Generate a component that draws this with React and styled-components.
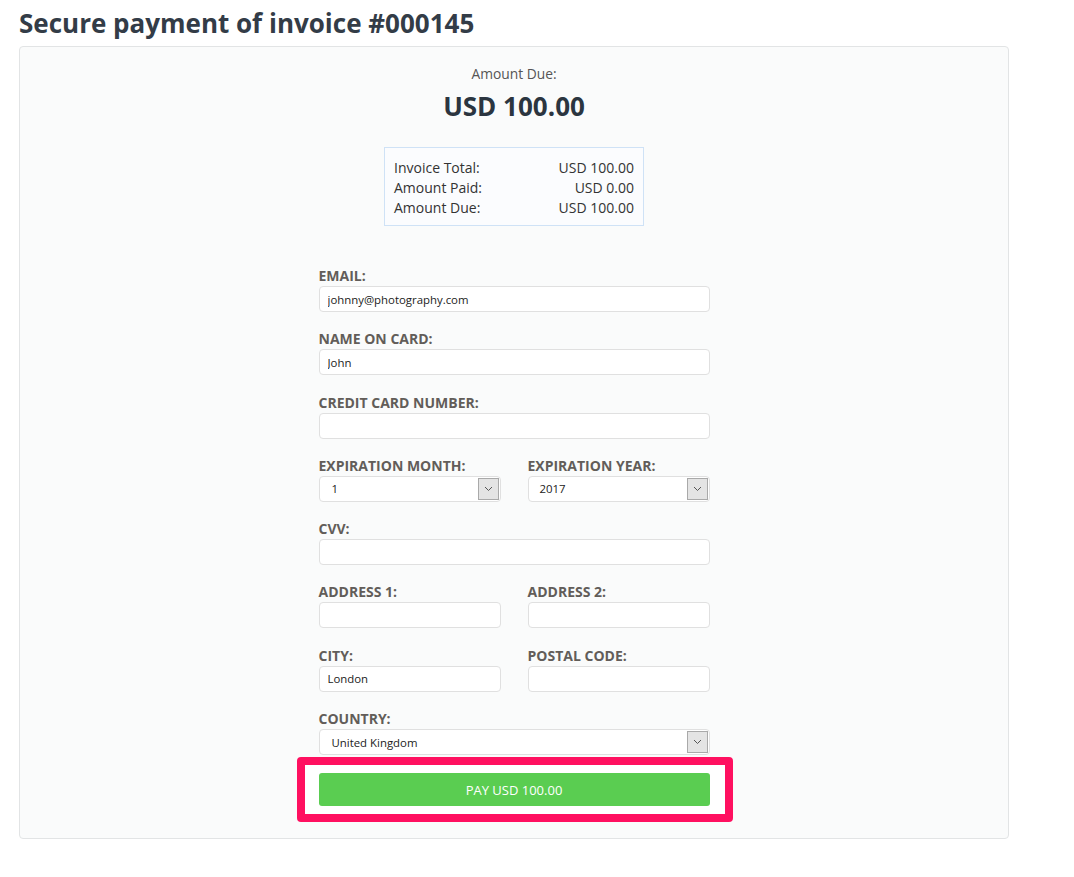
import React from "react";
import styled, { createGlobalStyle } from "styled-components";

const GlobalStyle = createGlobalStyle`
  body {
    margin: 0;
    background: #fff;
    font-family: "Open Sans", "Liberation Sans", sans-serif;
    color: #333;
  }
`;

const Page = styled.div`
  padding: 0 19px;
  width: 990px;
`;

const Title = styled.h1`
  margin: 0;
  padding-top: 6px;
  height: 40px;
  font-size: 26px;
  line-height: 34px;
  font-weight: 700;
  color: #333c47;
`;

const Panel = styled.section`
  background: #fafbfb;
  border: 1px solid #e2e4e5;
  border-radius: 4px;
  padding: 17px 0 16px;
  display: flex;
  flex-direction: column;
  align-items: center;
`;

const DueLabel = styled.div`
  font-size: 13.8px;
  line-height: 20px;
  color: #555;
`;

const DueAmount = styled.div`
  margin-top: 6px;
  font-size: 26px;
  line-height: 32px;
  font-weight: 700;
  color: #2b3540;
`;

const Summary = styled.div`
  margin-top: 25px;
  width: 260px;
  box-sizing: border-box;
  border: 1px solid #cfe2f6;
  background: #fbfcfe;
  padding: 10px 9px 7px 9px;
`;

const SummaryRow = styled.div`
  display: flex;
  justify-content: space-between;
  font-size: 14px;
  line-height: 20px;
  color: #333;
`;

const Form = styled.form`
  margin-top: 40px;
  width: 391px;
  display: flex;
  flex-direction: column;
`;

const Row = styled.div`
  display: grid;
  grid-template-columns: 182px 182px;
  column-gap: 27px;
`;

const Field = styled.div`
  display: flex;
  flex-direction: column;
  margin-bottom: ${(p) => (p.$last ? "2px" : "17.3px")};
`;

const Label = styled.label`
  font-size: 14px;
  line-height: 20px;
  font-weight: 700;
  color: #625d59;
  text-transform: uppercase;
`;

const Input = styled.input`
  box-sizing: border-box;
  height: 26px;
  width: 100%;
  border: 1px solid #e0e0e0;
  border-radius: 4px;
  background: #fff;
  padding: 0 8px;
  font-family: "Open Sans", "Liberation Sans", sans-serif;
  font-size: 11.4px;
  color: #222;
  outline: none;
`;

const SelectBox = styled.div`
  box-sizing: border-box;
  height: 26px;
  border: 1px solid #e0e0e0;
  border-radius: 4px;
  background: #fff;
  display: flex;
  align-items: stretch;
  font-size: 11.4px;
  color: #222;
`;

const SelectValue = styled.span`
  flex: 1;
  display: flex;
  align-items: center;
  padding-left: ${(p) => p.$indent || "12px"};
`;

const Arrow = styled.span`
  width: 19px;
  margin: 1px 1px 1px 0;
  background: #e4e4e4;
  border: 1px solid #a9a9a9;
  display: flex;
  align-items: center;
  justify-content: center;
`;

const Highlight = styled.div`
  margin: 0 -23px 0 -22px;
  border: 8px solid #ff1060;
  border-radius: 4px;
  background: #fff;
  padding: 8px 15px 8px 14px;
`;

const PayButton = styled.button`
  display: block;
  width: 100%;
  height: 33px;
  border: none;
  border-radius: 3px;
  background: #5acd51;
  color: #fff;
  font-family: "Open Sans", "Liberation Sans", sans-serif;
  font-size: 13px;
  cursor: pointer;
`;

const Chevron = () => (
  <svg width="9" height="6" viewBox="0 0 9 6">
    <path d="M1 1l3.5 3.5L8 1" fill="none" stroke="#555" strokeWidth="1" />
  </svg>
);

const Select = ({ value, indent }) => (
  <SelectBox>
    <SelectValue $indent={indent}>{value}</SelectValue>
    <Arrow>
      <Chevron />
    </Arrow>
  </SelectBox>
);

export default function App() {
  return (
    <Page>
      <GlobalStyle />
      <Title>Secure payment of invoice #000145</Title>
      <Panel>
        <DueLabel>Amount Due:</DueLabel>
        <DueAmount>USD 100.00</DueAmount>
        <Summary>
          <SummaryRow>
            <span>Invoice Total:</span>
            <span>USD 100.00</span>
          </SummaryRow>
          <SummaryRow>
            <span>Amount Paid:</span>
            <span>USD 0.00</span>
          </SummaryRow>
          <SummaryRow>
            <span>Amount Due:</span>
            <span>USD 100.00</span>
          </SummaryRow>
        </Summary>
        <Form onSubmit={(e) => e.preventDefault()}>
          <Field>
            <Label>Email:</Label>
            <Input defaultValue="johnny@photography.com" />
          </Field>
          <Field>
            <Label>Name on card:</Label>
            <Input defaultValue="John" />
          </Field>
          <Field>
            <Label>Credit card number:</Label>
            <Input />
          </Field>
          <Row>
            <Field>
              <Label>Expiration month:</Label>
              <Select value="1" indent="12px" />
            </Field>
            <Field>
              <Label>Expiration year:</Label>
              <Select value="2017" indent="11px" />
            </Field>
          </Row>
          <Field>
            <Label>CVV:</Label>
            <Input />
          </Field>
          <Row>
            <Field>
              <Label>Address 1:</Label>
              <Input />
            </Field>
            <Field>
              <Label>Address 2:</Label>
              <Input />
            </Field>
          </Row>
          <Row>
            <Field>
              <Label>City:</Label>
              <Input defaultValue="London" />
            </Field>
            <Field>
              <Label>Postal code:</Label>
              <Input />
            </Field>
          </Row>
          <Field $last>
            <Label>Country:</Label>
            <Select value="United Kingdom" indent="12px" />
          </Field>
          <Highlight>
            <PayButton type="submit">PAY USD 100.00</PayButton>
          </Highlight>
        </Form>
      </Panel>
    </Page>
  );
}
